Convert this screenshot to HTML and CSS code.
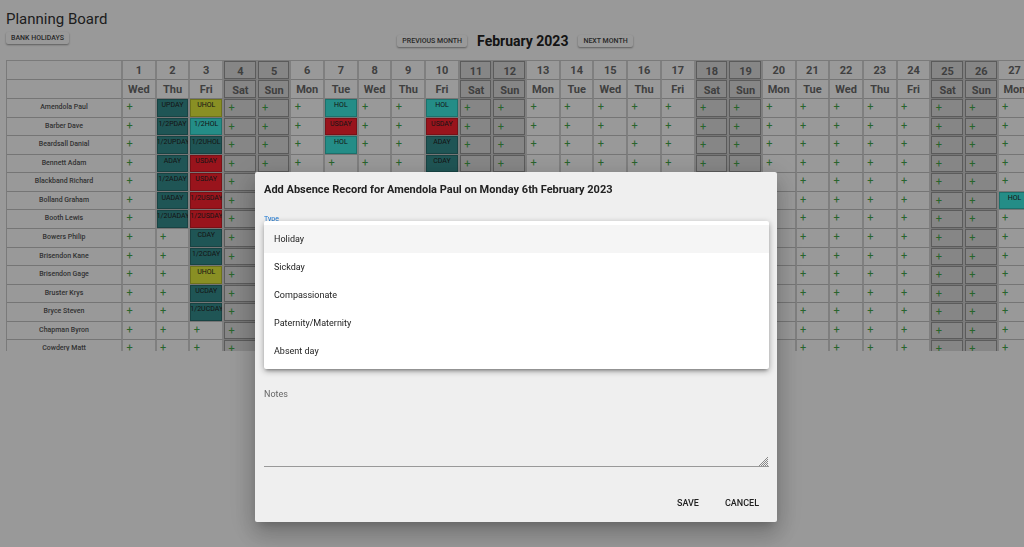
FILE: index.html
```
<!DOCTYPE html>
<html lang="en">
<head>
	<meta charset="UTF-8">
	<meta name="viewport" content="width=device-width, initial-scale=1.0">
	<title>Planning Board</title>
	<link rel="stylesheet" href="styles.css">
</head>
<body>

<main class="page">
	<h1 class="pageTitle">Planning Board</h1>
	<button class="smallBtn" type="button">Bank Holidays</button>

	<div class="monthBar">
		<button class="smallBtn" type="button">Previous Month</button>
		<h2 class="monthName">February 2023</h2>
		<button class="smallBtn" type="button">Next Month</button>
	</div>

	<div class="boardWrap">
		<table class="board">
			<thead id="boardHead"></thead>
			<tbody id="boardBody"></tbody>
		</table>
	</div>
</main>

<div class="backdrop">
	<form class="dialog" role="dialog" aria-labelledby="dialogTitle">
		<h2 class="dialogTitle" id="dialogTitle">Add Absence Record for Amendola Paul on Monday 6th February 2023</h2>

		<div class="field typeField">
			<label class="typeLabel" for="type">Type</label>
			<select class="typeSelect" id="type">
				<option>Holiday</option>
				<option>Sickday</option>
				<option>Compassionate</option>
				<option>Paternity/Maternity</option>
				<option>Absent day</option>
			</select>
			<ul class="menu" role="listbox" aria-label="Type">
				<li class="menuItem active" role="option" aria-selected="true">Holiday</li>
				<li class="menuItem" role="option">Sickday</li>
				<li class="menuItem" role="option">Compassionate</li>
				<li class="menuItem" role="option">Paternity/Maternity</li>
				<li class="menuItem" role="option">Absent day</li>
			</ul>
		</div>

		<div class="field notesField">
			<label class="notesLabel" for="notes">Notes</label>
			<textarea class="notes" id="notes"></textarea>
			<svg class="grip" viewBox="0 0 9 9" aria-hidden="true">
				<path d="M0 9L9 0M2 9L9 2M4 9L9 4M6 9L9 6M8 9L9 8"/>
			</svg>
		</div>

		<div class="actions">
			<button class="textBtn" type="button">Save</button>
			<button class="textBtn" type="button">Cancel</button>
		</div>
	</form>
</div>

<script src="script.js"></script>
</body>
</html>
```
FILE: styles.css
```
*{
	margin: 0;
	padding: 0;
	box-sizing: border-box;
}

body{
	font-family: Roboto, "Liberation Sans", sans-serif;
	font-size: 9px;
	color: #222;
	background: #fff;
	overflow: hidden;
}

.page{
	padding: 9px 0 0 6px;
}

.pageTitle{
	color: #333;
	font-size: 15px;
	font-weight: 400;
	line-height: 20px;
}

/* raised buttons */
.smallBtn{
	display: block;
	height: 12px;
	padding: 0 5px;
	border: none;
	border-radius: 2px;
	background: #fff;
	color: #444;
	font-family: inherit;
	font-size: 7px;
	font-weight: 500;
	line-height: 12px;
	text-transform: uppercase;
	box-shadow: 0 1px 2px rgba(0, 0, 0, .4);
	cursor: pointer;
}

.pageTitle + .smallBtn{
	margin-top: 3px;
}

.monthBar{
	display: flex;
	justify-content: center;
	align-items: center;
	gap: 10px;
	height: 16px;
	margin: -11px 0 11px;
}

.monthName{
	font-size: 14px;
	font-weight: 700;
	line-height: 16px;
}

/* board */
.boardWrap{
	max-height: 291px;
	overflow: hidden;
}

.board{
	display: block;
	width: 1060px;
	border-top: 1px solid #ccc;
	border-left: 1px solid #ccc;
}

.board thead,
.board tbody{
	display: grid;
	grid-auto-rows: 1fr;
}

.board thead{
	height: 38px;
}

.board tbody{
	height: 260px;
}

.board tr{
	display: grid;
	grid-template-columns: 116px repeat(28, 1fr);
	min-height: 0;
}

.board th,
.board td{
	min-width: 0;
	min-height: 0;
	overflow: hidden;
	border-right: 2px solid #d4d4d4;
	border-bottom: 1px solid #c4c4c4;
}

.board thead th{
	color: #6a6a6a;
	font-size: 11px;
	font-weight: 700;
	line-height: 20px;
	text-align: center;
}

.board .name{
	color: #555;
	font-size: 7px;
	font-weight: 500;
	line-height: 17px;
	text-align: center;
}

.board .weekend{
	padding: 1px 0 0 1px;
	background: #e0e0e0;
	box-shadow: inset 0 0 0 1px #989898;
}

.add{
	display: block;
	width: 13px;
	border: none;
	background: none;
	color: #43a84a;
	font-family: inherit;
	font-size: 11px;
	font-weight: 400;
	line-height: 16px;
	text-align: center;
	cursor: pointer;
}

.board .absence{
	color: #222;
	font-size: 7px;
	font-weight: 400;
	line-height: 13px;
	text-align: center;
	white-space: nowrap;
	box-shadow: inset 0 0 0 1px rgba(0, 0, 0, .2);
}

.board .hol{
	background-color: #3cebe1;
}

.board .unpaidHol{
	background-color: #e4ee3c;
}

.board .sick{
	background-color: #ff2230;
}

.board .day{
	background-color: #348e8e;
}

/* dialog */
.backdrop{
	position: fixed;
	inset: 0;
	display: flex;
	justify-content: center;
	align-items: flex-start;
	padding: 172px 0 0 8px;
	background: rgba(0, 0, 0, .4);
}

.dialog{
	width: 522px;
	padding: 8px 8px 9px 9px;
	border-radius: 2px;
	background: #efefef;
	box-shadow: 0 6px 9px -4px rgba(0, 0, 0, .2), 0 14px 22px 2px rgba(0, 0, 0, .14), 0 5px 27px 5px rgba(0, 0, 0, .12);
}

.dialogTitle{
	font-size: 11px;
	font-weight: 700;
	line-height: 20px;
}

.field{
	position: relative;
	display: flex;
	flex-direction: column;
}

.typeField{
	margin-top: 13px;
}

.typeLabel{
	color: #1976d2;
	font-size: 7px;
	line-height: 12px;
}

.typeSelect{
	height: 20px;
	border: none;
	border-bottom: 1px solid #999;
	background: none;
	font-family: inherit;
	font-size: 9px;
}

.menu{
	position: absolute;
	top: 8px;
	left: 0;
	right: 0;
	padding: 4px 0;
	border-radius: 2px;
	background: #fff;
	box-shadow: 0 3px 3px -2px rgba(0, 0, 0, .3), 0 2px 6px rgba(0, 0, 0, .35);
	list-style: none;
}

.menuItem{
	height: 28px;
	padding: 0 10px;
	color: #222;
	font-size: 9px;
	line-height: 29px;
}

.menuItem.active{
	background: #f5f5f5;
}

.notesField{
	margin-top: 143px;
}

.notesLabel{
	color: #666;
	font-size: 9px;
	line-height: 12px;
}

.notes{
	height: 67px;
	border: none;
	border-bottom: 1px solid #999;
	outline: none;
	background: none;
	font-family: inherit;
	font-size: 9px;
	resize: none;
}

.grip{
	position: absolute;
	right: 1px;
	bottom: 1px;
	width: 9px;
	height: 9px;
	fill: none;
	stroke: #888;
}

.actions{
	display: flex;
	justify-content: flex-end;
	gap: 6px;
	margin-top: 26px;
}

.textBtn{
	height: 20px;
	padding: 0 10px;
	border: none;
	background: none;
	color: #222;
	font-family: inherit;
	font-size: 9px;
	font-weight: 500;
	line-height: 20px;
	text-transform: uppercase;
	cursor: pointer;
}
```
FILE: script.js
```
var dayNames = ['Sun', 'Mon', 'Tue', 'Wed', 'Thu', 'Fri', 'Sat'];
var firstDay = 3; // the 1st is a Wednesday
var daysInMonth = 28;

// name and absences by day of the month
var staff = [
	['Amendola Paul', {2: 'UPDAY', 3: 'UHOL', 7: 'HOL', 10: 'HOL'}],
	['Barber Dave', {2: '1/2PDAY', 3: '1/2HOL', 7: 'USDAY', 10: 'USDAY'}],
	['Beardsall Danial', {2: '1/2UPDAY', 3: '1/2UHOL', 7: 'HOL', 10: 'ADAY'}],
	['Bennett Adam', {2: 'ADAY', 3: 'USDAY', 10: 'CDAY'}],
	['Blackband Richard', {2: '1/2ADAY', 3: 'USDAY'}],
	['Bolland Graham', {2: 'UADAY', 3: '1/2USDAY', 27: 'HOL'}],
	['Booth Lewis', {2: '1/2UADAY', 3: '1/2USDAY'}],
	['Bowers Philip', {3: 'CDAY'}],
	['Brisendon Kane', {3: '1/2CDAY'}],
	['Brisendon Gage', {3: 'UHOL'}],
	['Bruster Krys', {3: 'UCDAY'}],
	['Bryce Steven', {3: '1/2UCDAY'}],
	['Chapman Byron', {}],
	['Cowdery Matt', {}]
];

var colours = {
	'HOL': 'hol',
	'1/2HOL': 'hol',
	'UHOL': 'unpaidHol',
	'USDAY': 'sick',
	'1/2USDAY': 'sick'
};

function dayName(day){
	return dayNames[(day - 1 + firstDay) % 7];
}

function weekend(day){
	return dayName(day)[0] == 'S' ? 'weekend' : '';
}

// two header rows: numbers, then day names
function headRow(getText){
	var row = '<tr><th></th>';
	for(var d = 1 ; d <= daysInMonth ; d++){
		row += '<th class="' + weekend(d) + '">' + getText(d) + '</th>';
	}
	return row + '</tr>';
}

function staffRow(person){
	var row = '<tr><th class="name">' + person[0] + '</th>';
	for(var d = 1 ; d <= daysInMonth ; d++){
		var code = person[1][d];
		if(code){
			row += '<td class="absence ' + (colours[code] || 'day') + '">' + code + '</td>';
		}else{
			row += '<td class="' + weekend(d) + '"><button class="add" type="button">+</button></td>';
		}
	}
	return row + '</tr>';
}

document.getElementById('boardHead').innerHTML =
	headRow(function(d){ return d; }) + headRow(dayName);
document.getElementById('boardBody').innerHTML = staff.map(staffRow).join('');
```
